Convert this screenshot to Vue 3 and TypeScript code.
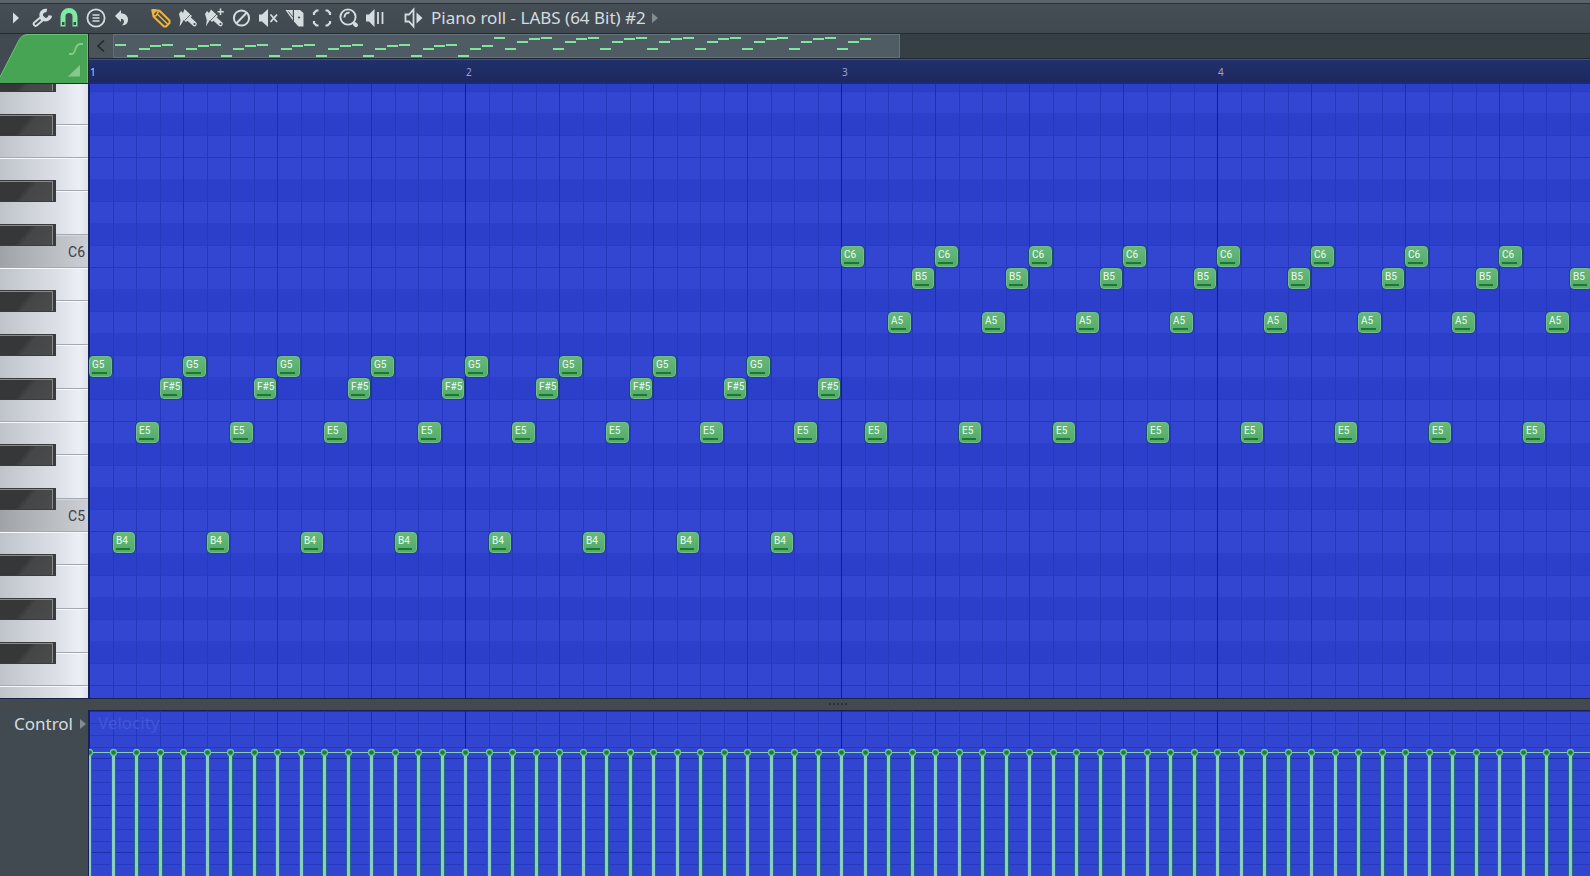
<script setup lang="ts">
interface Note {
  step: number
  midi: number
  label: string
}

interface WhiteKey {
  midi: number
  start: number
  span: number
  label: string
}

const PITCHES = ['C', 'C#', 'D', 'D#', 'E', 'F', 'F#', 'G', 'G#', 'A', 'A#', 'B']
const TOP_MIDI = 92
const ROW_COUNT = 29
const ROW_HEIGHT = 22
const STEP_COUNT = 64
const BAR_WIDTH = 376
const VELOCITY_Y = 41

const keyName = (midi: number): string => PITCHES[midi % 12] + (Math.floor(midi / 12) - 1)
const isBlack = (midi: number): boolean => PITCHES[midi % 12].length > 1
const stepX = (step: number): number => Math.ceil((step * BAR_WIDTH) / 16)

const lowPhrase = [79, 71, 76, 78]
const highPhrase = [84, 76, 81, 83]

const notes: Note[] = Array.from({ length: STEP_COUNT }, (_, step) => {
  const phrase = step < 32 ? lowPhrase : highPhrase
  const midi = phrase[step % 4]
  return { step, midi, label: keyName(midi) }
})

const rows = Array.from({ length: ROW_COUNT }, (_, i) => TOP_MIDI - i)
const blackKeys = rows.filter(isBlack)

// White keys meet halfway across the black key between them, so the keyboard counts in half rows.
const edge = (midi: number): number => (TOP_MIDI - midi) * 2
const whiteKeys: WhiteKey[] = rows
  .filter((midi) => !isBlack(midi))
  .map((midi) => {
    const start = edge(midi) - (isBlack(midi + 1) ? 1 : 0)
    const end = edge(midi) + 2 + (isBlack(midi - 1) ? 1 : 0)
    return { midi, start, span: end - start, label: midi % 12 === 0 ? keyName(midi) : '' }
  })

const noteStyle = (note: Note) => ({
  left: stepX(note.step) + 'px',
  top: (TOP_MIDI - note.midi) * ROW_HEIGHT + 'px',
  width: stepX(note.step + 1) - stepX(note.step) + 'px',
})

const bars = [1, 2, 3, 4]
const mapX = (step: number): number => 1 + Math.round(step * 11.83)
const mapY = (midi: number): number => Math.round(20 - (midi - 71) * 1.42)
</script>

<template>
  <main class="app">
    <div class="window-edge"></div>
    <header class="toolbar">
      <div class="tools">
        <button class="tool" aria-label="Menu">
          <svg viewBox="0 0 24 24"><path d="M10 6.500L16 12L10 17.500Z" fill="currentColor" /></svg>
        </button>
        <button class="tool" aria-label="Tools">
          <svg viewBox="0 0 24 24">
            <path d="M12 12.500L5.500 18" stroke="currentColor" stroke-width="5.600" stroke-linecap="round" />
            <path d="M16.800 4.600A4.600 4.600 0 1 0 20.300 9.500" fill="none" stroke="currentColor" stroke-width="3.600" />
            <path d="M5.500 18L10 14.200" stroke="#424b50" stroke-width="1.800" stroke-linecap="round" />
          </svg>
        </button>
        <button class="tool magnet" aria-label="Snap">
          <svg viewBox="0 0 24 24">
            <path d="M6 20.500V10.500A6 6 0 0 1 18 10.500V20.500" fill="none" stroke="currentColor" stroke-width="5" />
            <path d="M5 16H7.500V19H5ZM16.500 16H19V19H16.500Z" fill="#36503f" />
          </svg>
        </button>
        <button class="tool" aria-label="Stamp">
          <svg viewBox="0 0 24 24" fill="none" stroke="currentColor">
            <circle cx="12" cy="12" r="8.600" stroke-width="1.800" />
            <path d="M8.500 9H15.500M8.500 12H15.500M8.500 15H15.500" stroke-width="1.400" />
          </svg>
        </button>
        <button class="tool" aria-label="Undo">
          <svg viewBox="0 0 24 24">
            <path d="M4 10L10 4V7.200C15 7.400 18 11 16.800 15.500C16.200 18 14.200 19.400 11 19.200C13.800 17 13.800 13 10 12.800V16Z" fill="currentColor" />
          </svg>
        </button>
      </div>
      <div class="tools">
        <button class="tool pencil" aria-label="Draw">
          <svg viewBox="0 0 24 24" fill="none" stroke="currentColor" stroke-width="2" stroke-linejoin="round">
            <path d="M3.500 4L10.500 4.800L20.500 14.500V17L17 20.500H15L4.500 10.500Z" />
            <path d="M4.500 10.500L7.200 9.500L8.500 7L10.500 4.800M8.500 8.200L19 18.500" stroke-width="1.500" />
            <path d="M3.500 4L7 4.400L4 7.500Z" fill="currentColor" />
          </svg>
        </button>
        <button class="tool" aria-label="Paint">
          <svg viewBox="0 0 24 24">
            <path d="M3 8L5 5L7 7L8.500 3L16 10L10 16L7.500 14L6 17L3.500 20.500L4.500 14Z" fill="currentColor" />
            <path d="M13 13L18.500 18" stroke="currentColor" stroke-width="4.600" stroke-linecap="round" />
            <path d="M8.500 14.500L15 8" stroke="#424b50" stroke-width="0.800" />
            <circle cx="18.500" cy="18" r="1.100" fill="#424b50" />
          </svg>
        </button>
        <button class="tool" aria-label="Paint sequence">
          <svg viewBox="0 0 24 24">
            <path d="M2 8L4 5L6 7L8 3.500L15 10L9 16L7 14L5 17L3 20.500L3.800 14Z" fill="currentColor" />
            <path d="M12 13L17.500 18" stroke="currentColor" stroke-width="4.600" stroke-linecap="round" />
            <path d="M7.500 14.500L14 8" stroke="#424b50" stroke-width="0.800" />
            <circle cx="17.500" cy="18" r="1.100" fill="#424b50" />
            <path d="M17.500 2.500V9M14.500 5.800H20.800" stroke="currentColor" stroke-width="1.600" />
          </svg>
        </button>
        <button class="tool" aria-label="Delete">
          <svg viewBox="0 0 24 24" fill="none" stroke="currentColor" stroke-width="2">
            <circle cx="11.500" cy="12" r="7.600" />
            <path d="M6.500 17.200L16.600 6.800" />
          </svg>
        </button>
        <button class="tool" aria-label="Mute">
          <svg viewBox="0 0 24 24">
            <path d="M2 8.500H5L11 3V21L5 15.500H2Z" fill="currentColor" />
            <path d="M13.500 8.500L20 16M20 8.500L13.500 16" stroke="currentColor" stroke-width="1.900" />
          </svg>
        </button>
        <button class="tool" aria-label="Slice">
          <svg viewBox="0 0 24 24">
            <path d="M1.500 4H8.800V14.500Z" fill="currentColor" />
            <path d="M4.500 5.500L8.800 11" stroke="#424b50" stroke-width="0.900" />
            <path d="M10 4H16L19.500 7V20.500H14.500L10 15.500Z" fill="currentColor" />
            <circle cx="15" cy="11.500" r="1.100" fill="#424b50" />
          </svg>
        </button>
        <button class="tool" aria-label="Select">
          <svg viewBox="0 0 24 24" fill="none" stroke="currentColor" stroke-width="2.200">
            <path d="M7.500 4.500H5.500L3 7V9M14.500 4.500H16.500L19 7V9M7.500 19.500H5.500L3 17V15M14.500 19.500H16.500L19 17V15" />
          </svg>
        </button>
        <button class="tool" aria-label="Zoom">
          <svg viewBox="0 0 24 24" fill="none" stroke="currentColor">
            <circle cx="10" cy="11" r="7.600" stroke-width="1.900" />
            <path d="M6.500 11.500A4.200 4.200 0 0 1 11.500 6.800" stroke-width="2" />
            <path d="M16.800 18L18 19.200" stroke-width="4" stroke-linecap="round" />
          </svg>
        </button>
        <button class="tool" aria-label="Playback">
          <svg viewBox="0 0 24 24">
            <path d="M1 8.500H4L9.500 3V21L4 15.500H1Z" fill="currentColor" />
            <path d="M13 6V18M17.500 6V18" stroke="currentColor" stroke-width="1.800" />
          </svg>
        </button>
      </div>
      <button class="channel">
        <svg viewBox="0 0 24 24">
          <path d="M4.500 8.500H8L12.500 3.500V20.500L8 15.500H4.500Z" fill="none" stroke="currentColor" stroke-width="1.800" />
          <path d="M15.500 6.500L21.500 12L15.500 17.500Z" fill="currentColor" />
        </svg>
        <span>Piano roll - LABS (64 Bit) #2</span>
        <svg class="more" viewBox="0 0 6 12"><path d="M0 1L6 6L0 11Z" fill="currentColor" /></svg>
      </button>
    </header>

    <div class="head">
      <div class="corner">
        <svg class="corner-shape" viewBox="0 0 88 50" preserveAspectRatio="none">
          <path d="M0 43L19 6Q22 0.500 28 0.500H87.500V49H0Z" fill="#48a455" />
          <path d="M0 43L19 6Q22 0.500 28 0.500H87.500V49" fill="none" stroke="#6cc278" />
          <path d="M0 49.500H88" stroke="#123c1d" />
        </svg>
        <button class="corner-tool" aria-label="Slide">
          <svg viewBox="0 0 16 14"><path d="M1 12H4C8 12 6.500 2 12 2H15" fill="none" stroke="currentColor" stroke-width="1.800" /></svg>
        </button>
        <button class="corner-tool" aria-label="Ramp">
          <svg viewBox="0 0 16 14"><path d="M0 12.500L12 1V12.500Z" fill="currentColor" /></svg>
        </button>
      </div>
      <div class="timeline">
        <div class="minimap">
          <button class="scroll-left" aria-label="Scroll left">
            <svg viewBox="0 0 10 14"><path d="M8 1.500L2 7L8 12.500" fill="none" stroke="currentColor" stroke-width="1.500" /></svg>
          </button>
          <div class="viewport">
            <svg class="map-notes">
              <rect
                v-for="note in notes"
                :key="note.step"
                :x="mapX(note.step)"
                :y="mapY(note.midi)"
                width="11"
                height="2"
              />
            </svg>
          </div>
        </div>
        <div class="ruler">
          <span v-for="bar in bars" :key="bar" class="bar-number" :class="{ first: bar === 1 }">{{ bar }}</span>
        </div>
      </div>
    </div>

    <section class="roll">
      <div class="keyboard">
        <button
          v-for="key in whiteKeys"
          :key="key.midi"
          class="white-key"
          :class="{ root: key.label }"
          :aria-label="keyName(key.midi)"
          :style="{ gridRow: `${key.start + 1} / span ${key.span}` }"
        >
          {{ key.label }}
        </button>
        <button
          v-for="midi in blackKeys"
          :key="midi"
          class="black-key"
          :aria-label="keyName(midi)"
          :style="{ gridRow: `${edge(midi) + 1} / span 2` }"
        ></button>
      </div>
      <div class="grid">
        <div class="lanes">
          <div
            v-for="midi in rows"
            :key="midi"
            class="lane"
            :class="{ dark: isBlack(midi), split: midi % 12 === 0 || midi % 12 === 5 }"
          ></div>
          <div class="beats"></div>
          <div v-for="note in notes" :key="note.step" class="note" :style="noteStyle(note)">
            <span class="note-body">{{ note.label }}</span>
          </div>
        </div>
      </div>
    </section>

    <div class="splitter"><span class="grip"></span></div>

    <section class="control">
      <button class="control-picker">
        <span>Control</span>
        <svg class="more" viewBox="0 0 6 12"><path d="M0 1L6 6L0 11Z" fill="currentColor" /></svg>
      </button>
      <div class="velocity">
        <div class="levels"></div>
        <div class="beats"></div>
        <span class="velocity-name">Velocity</span>
        <svg class="stems">
          <rect x="0" :y="VELOCITY_Y" width="100%" height="1" fill="#84cdb9" />
          <g v-for="note in notes" :key="note.step">
            <rect :x="stepX(note.step) - 2" :y="VELOCITY_Y" width="5" height="100%" fill="#246a80" />
            <rect :x="stepX(note.step) - 1" :y="VELOCITY_Y" width="3" height="100%" fill="#88d0bd" />
            <circle :cx="stepX(note.step) + 0.5" :cy="VELOCITY_Y + 0.5" r="3" fill="#1c7f35" stroke="#68c394" stroke-width="1.300" />
          </g>
        </svg>
      </div>
    </section>
  </main>
</template>

<style>
body {
  margin: 0;
  background: #414a50;
}
</style>

<style scoped>
.app {
  display: flex;
  flex-direction: column;
  height: 100vh;
  overflow: hidden;
  background: #414a50;
  color: #d5dce0;
  font-family: "Noto Sans", "Open Sans", sans-serif;
  font-size: 17px;
}

button {
  margin: 0;
  padding: 0;
  border: 0;
  background: none;
  color: inherit;
  font: inherit;
}

.window-edge {
  flex: none;
  height: 3px;
  background: #5a646a;
  border-bottom: 1px solid #2a3238;
}

.toolbar {
  display: flex;
  flex: none;
  align-items: center;
  gap: 11px;
  box-sizing: border-box;
  height: 30px;
  padding: 0 0 1px 1px;
  border-bottom: 1px solid #242c33;
  background: linear-gradient(#454e54, #40494f);
}

.tools {
  display: flex;
}

.tool {
  display: flex;
  justify-content: center;
  width: 27px;
}

.tool svg,
.channel svg {
  width: 24px;
  height: 24px;
}

.tool.magnet {
  color: #7eeaa3;
}

.tool.pencil {
  color: #efb33f;
}

.channel {
  display: flex;
  align-items: center;
  gap: 6px;
  line-height: 22px;
  white-space: nowrap;
}

.channel svg.more,
.control-picker .more {
  width: 6px;
  height: 12px;
  color: #838c91;
}

.head {
  display: flex;
  flex: none;
  height: 50px;
}

.corner {
  display: flex;
  position: relative;
  flex: none;
  flex-direction: column;
  align-items: flex-end;
  justify-content: space-between;
  box-sizing: border-box;
  width: 88px;
  padding: 8px 4px 6px 0;
  color: #86c88d;
}

.corner-shape {
  position: absolute;
  inset: 0;
  width: 100%;
  height: 100%;
}

.corner-tool {
  display: flex;
  position: relative;
}

.corner-tool svg {
  width: 16px;
  height: 14px;
}

.timeline {
  display: flex;
  flex: 1;
  flex-direction: column;
  min-width: 0;
  border-left: 1px solid #1d262c;
}

.minimap {
  display: flex;
  height: 24px;
  border-bottom: 1px solid #1c2634;
  background: linear-gradient(#353e45, #363f42);
}

.scroll-left {
  display: flex;
  flex: none;
  align-items: center;
  justify-content: center;
  width: 25px;
  border-right: 1px solid #5c7850;
  background: #4a5459;
  color: #20272b;
}

.scroll-left svg {
  width: 10px;
  height: 14px;
}

.viewport {
  box-sizing: border-box;
  width: 786px;
  border: 1px solid #65727a;
  border-left: 0;
  background: #4f5c64;
}

.map-notes {
  display: block;
  width: 100%;
  height: 100%;
  fill: #7fe79c;
}

.ruler {
  display: flex;
  flex: 1;
  align-items: center;
  overflow: hidden;
  padding: 1px 0 0 1px;
  border-top: 1px solid #46526a;
  border-bottom: 2px solid #1c2a74;
  background: linear-gradient(#21306b, #1d285e);
}

.bar-number {
  flex: none;
  width: 376px;
  color: #98a2dc;
  font-size: 10px;
}

.bar-number.first {
  color: #c4caf0;
}

.roll {
  display: flex;
  flex: 1;
  min-height: 0;
  overflow: hidden;
  border-bottom: 1px solid #1a2448;
}

.keyboard {
  display: grid;
  flex: none;
  grid-template-rows: repeat(59, 11px);
  grid-template-columns: 56px 32px;
  width: 88px;
  margin-top: -14px;
}

.white-key {
  grid-column: 1 / -1;
  padding-right: 3px;
  border-top: 1px solid #f8f9fc;
  border-bottom: 1px solid #a4a8b0;
  background: linear-gradient(90deg, #bfc3ca, #dfe3e9 70%, #eceff5 90%, #dfe2e9);
  color: #3c4046;
  font-family: Roboto, sans-serif;
  font-size: 14px;
  line-height: 30px;
  text-align: right;
}

.white-key.root {
  border-top-color: #d3d6da;
  background: linear-gradient(90deg, #9fa3a8, #c3c6cb 80%, #cbced4);
}

.black-key {
  z-index: 1;
  grid-column: 1;
  border: solid #3a3b3d;
  border-width: 1px 3px 1px 0;
  background: linear-gradient(130deg, #363739 45%, #454648 55%, #4a4b4d);
  box-shadow: inset -1px 1px 0 #88898b;
}

.grid {
  position: relative;
  flex: 1;
  min-width: 0;
  overflow: hidden;
  border-left: 1px solid #14215c;
  background: #3145d0;
}

.lanes {
  position: relative;
  margin-top: -14px;
}

.lane {
  box-sizing: border-box;
  height: 22px;
  border-bottom: 1px solid #2c41ca;
  background: #3246d1;
}

.lane.dark {
  border-bottom-color: #283cc4;
  background: #2b3fca;
}

.lane.split {
  border-bottom-color: #2538ba;
}

.beats {
  position: absolute;
  inset: 0;
  background:
    repeating-linear-gradient(90deg, #0d1d96 0 1px, transparent 1px 376px),
    repeating-linear-gradient(90deg, #1c2fae 0 1px, transparent 1px 94px),
    repeating-linear-gradient(90deg, #2538bd 0 1px, transparent 1px 24px, #2538bd 24px 25px, transparent 25px 47px);
}

.note {
  display: flex;
  position: absolute;
  box-sizing: border-box;
  height: 22px;
  padding: 0 1px 1px 0;
}

.note-body {
  position: relative;
  flex: 1;
  box-sizing: border-box;
  padding-left: 2px;
  border: 1px solid #74bf88;
  border-radius: 4px;
  background: linear-gradient(#66b87c, #54ab6a);
  box-shadow: 0 0 0 1px #1b4a70;
  color: #f1faf3;
  font-family: Roboto, sans-serif;
  font-size: 10px;
  line-height: 15px;
  white-space: nowrap;
}

.note-body::after {
  position: absolute;
  right: 4px;
  bottom: 2px;
  left: 2px;
  height: 2px;
  background: #1a7831;
  content: "";
}

.splitter {
  display: flex;
  flex: none;
  align-items: center;
  justify-content: center;
  box-sizing: border-box;
  height: 11px;
  padding: 0 0 1px 86px;
  background: #424a4e;
}

.grip {
  width: 19px;
  height: 2px;
  background: repeating-linear-gradient(90deg, #2b3236 0 2px, transparent 2px 4px);
}

.control {
  display: flex;
  flex: none;
  height: 166px;
}

.control-picker {
  display: flex;
  flex: none;
  align-items: center;
  align-self: flex-start;
  justify-content: flex-end;
  gap: 7px;
  box-sizing: border-box;
  width: 88px;
  padding: 2px 2px 0 0;
  line-height: 24px;
}

.velocity {
  position: relative;
  flex: 1;
  min-width: 0;
  overflow: hidden;
  border-top: 1px solid #16215a;
  border-left: 1px solid #14215c;
  background: #3245d0;
}

.levels {
  position: absolute;
  inset: 0;
  background: repeating-linear-gradient(
    #1c2fae 0 1px,
    transparent 1px 12px,
    #273abf 12px 13px,
    transparent 13px 24px,
    #273abf 24px 25px,
    transparent 25px 36px,
    #273abf 36px 37px,
    transparent 37px 47px
  );
}

.velocity-name {
  position: relative;
  padding-left: 9px;
  color: #4455d8;
  line-height: 24px;
}

.stems {
  position: absolute;
  inset: 0;
  width: 100%;
  height: 100%;
}
</style>
